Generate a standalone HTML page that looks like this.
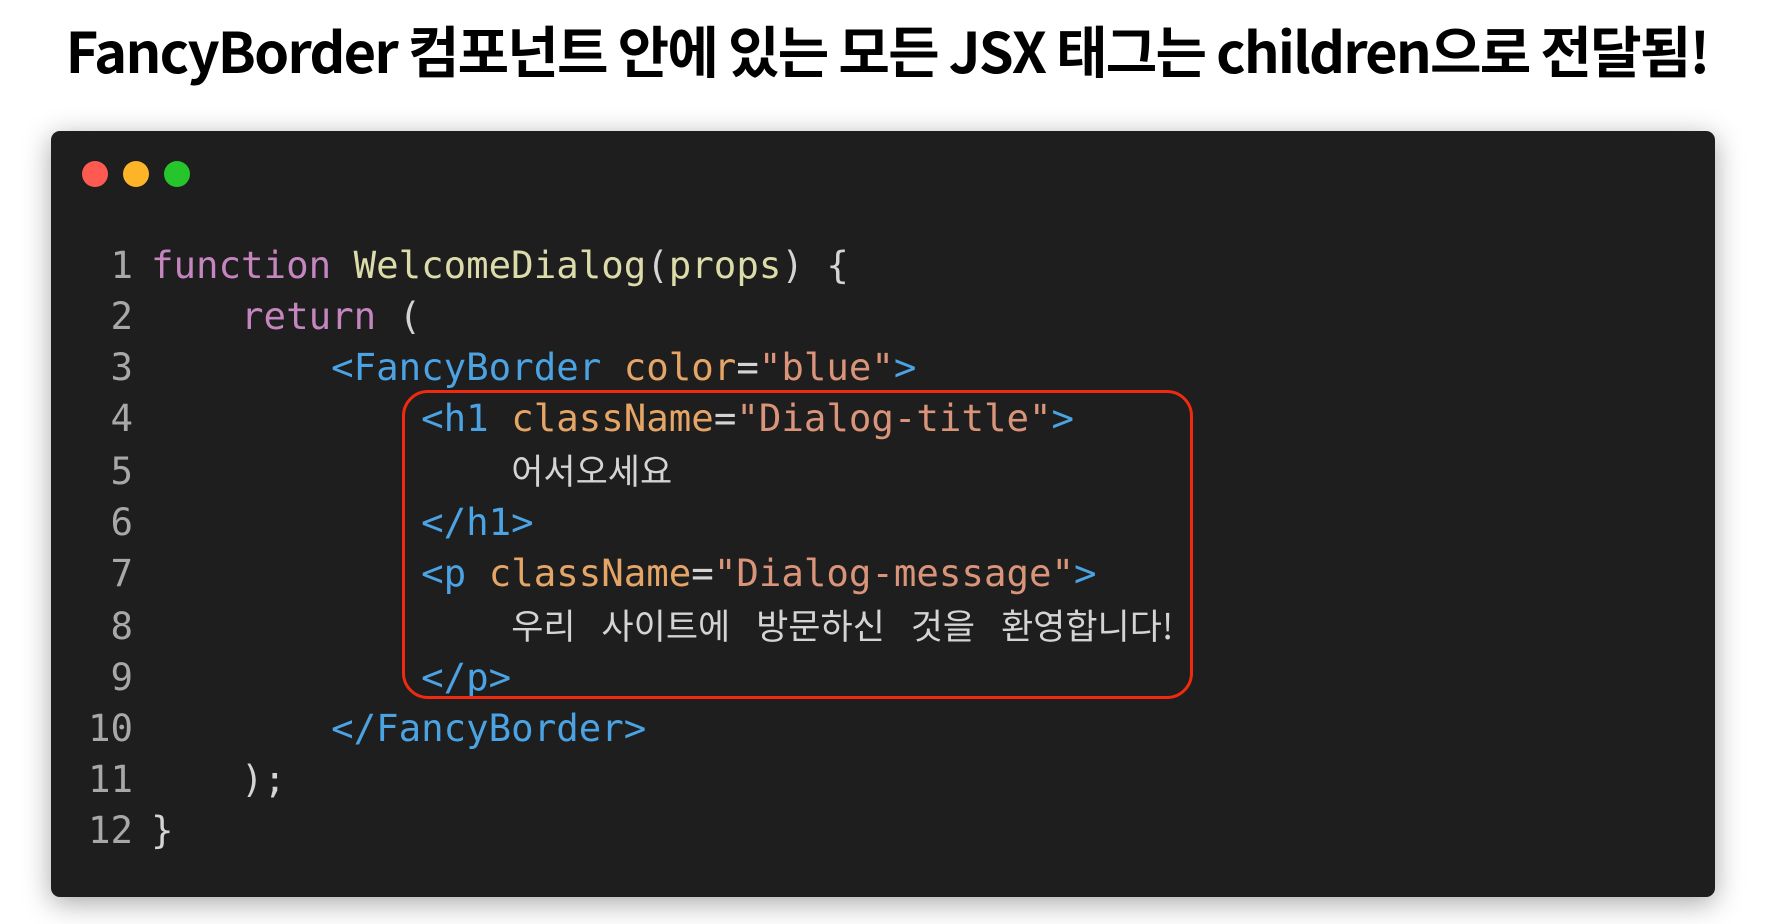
<!DOCTYPE html>
<html><head><meta charset="utf-8"><style>
html,body{margin:0;padding:0;background:#fff;width:1786px;height:924px;overflow:hidden;position:relative}
.title{position:absolute;left:0;top:5px;width:1774px;text-align:center;font-family:"Noto Sans CJK KR",sans-serif;font-weight:bold;font-size:56px;line-height:90px;color:#000;letter-spacing:-1.8px}
.win{position:absolute;left:51px;top:131px;width:1664px;height:766px;background:#1e1e1e;border-radius:9px;box-shadow:0 6px 28px rgba(0,0,0,.35)}
.dot{position:absolute;top:161px;width:26px;height:26px;border-radius:50%}
.code{position:absolute;left:60px;top:240px;font-family:"DejaVu Sans Mono","Liberation Mono","Noto Sans CJK KR",monospace;font-size:37.4px;line-height:51px;color:#d4d4d4;white-space:pre}
.ln{display:inline-block;width:73px;text-align:right;color:#a8a8a8;margin-right:18px}
.k{color:#c586c0}.f{color:#dcdcaa}.t{color:#4ba3e3}.a{color:#e5a566}.s{color:#d99479}
.kr{font-family:"Noto Sans CJK KR",sans-serif;font-size:35px}
.box{position:absolute;left:402px;top:390px;width:785px;height:303px;border:3.5px solid #f02a10;border-radius:26px}
</style></head><body>
<div class="title">FancyBorder 컴포넌트 안에 있는 모든 JSX 태그는 children으로 전달됨!</div>
<div class="win"></div>
<div class="dot" style="left:82px;background:#fe5a52"></div>
<div class="dot" style="left:123px;background:#fdb426"></div>
<div class="dot" style="left:164px;background:#26c52c"></div>
<div class="code"><span class="ln">1</span><span class="k">function</span> <span class="f">WelcomeDialog</span>(<span class="f">props</span>) {
<span class="ln">2</span>    <span class="k">return</span> (
<span class="ln">3</span>        <span class="t">&lt;FancyBorder</span> <span class="a">color</span>=<span class="s">"blue"</span><span class="t">&gt;</span>
<span class="ln">4</span>            <span class="t">&lt;h1</span> <span class="a">className</span>=<span class="s">"Dialog-title"</span><span class="t">&gt;</span>
<span class="ln">5</span>                <span class="kr">어서오세요</span>
<span class="ln">6</span>            <span class="t">&lt;/h1&gt;</span>
<span class="ln">7</span>            <span class="t">&lt;p</span> <span class="a">className</span>=<span class="s">"Dialog-message"</span><span class="t">&gt;</span>
<span class="ln">8</span>                <span class="kr" style="word-spacing:18px">우리 사이트에 방문하신 것을 환영합니다!</span>
<span class="ln">9</span>            <span class="t">&lt;/p&gt;</span>
<span class="ln">10</span>        <span class="t">&lt;/FancyBorder&gt;</span>
<span class="ln">11</span>    );
<span class="ln">12</span>}</div>
<div class="box"></div>
</body></html>
